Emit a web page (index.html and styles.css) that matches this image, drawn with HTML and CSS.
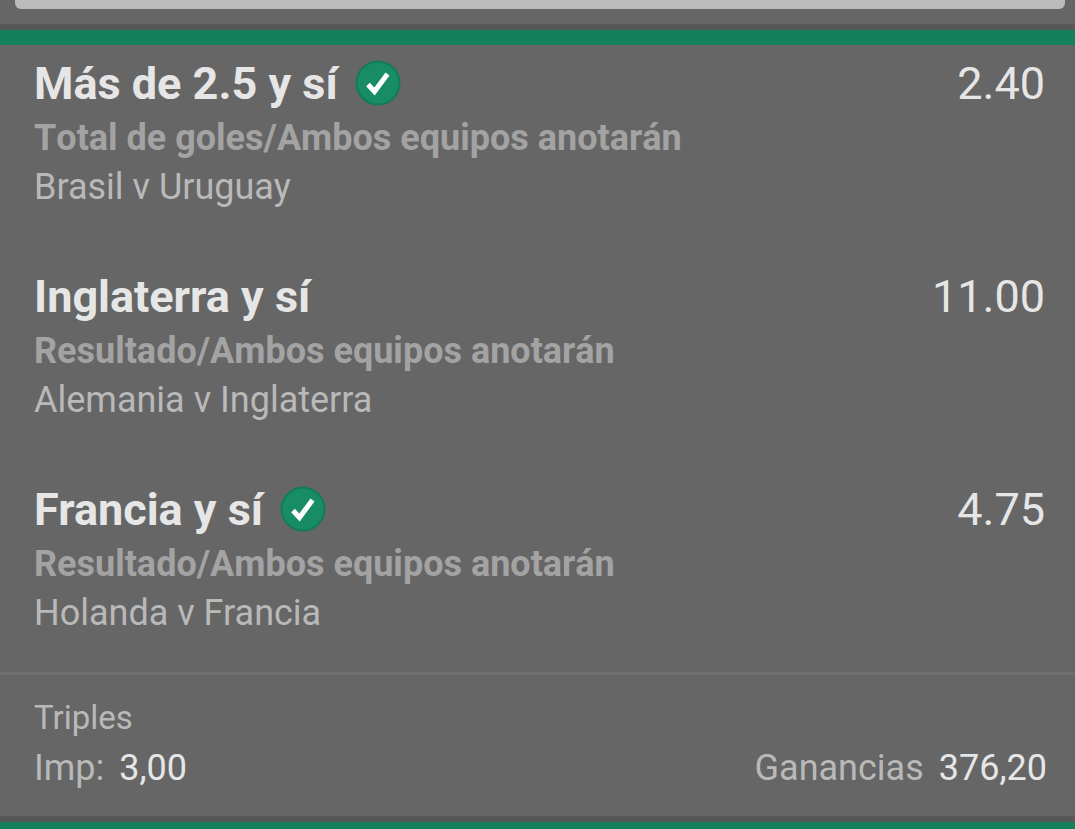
FILE: index.html
```html
<!DOCTYPE html>
<html lang="es">

<head>
  <meta charset="UTF-8">
  <meta name="viewport" content="width=device-width, initial-scale=1.0">
  <title>Mis apuestas</title>
  <link rel="stylesheet" href="styles.css">
</head>

<body>

  <!-- End of the previous card -->
  <div class="previous-card">
    <div class="previous-box"></div>
  </div>

  <main class="bet">
    <!-- Selections -->
    <ul class="selections">
      <li class="selection">
        <div class="selection-header">
          <h2>Más de 2.5 y sí</h2>
          <svg class="check" viewBox="0 0 46 46" role="img" aria-label="Acertada">
            <circle cx="23" cy="23" r="21.5" />
            <path d="M13 24.5L19.5 31.5L32.5 14" />
          </svg>
          <span class="odds">2.40</span>
        </div>
        <p class="market">Total de goles/Ambos equipos anotarán</p>
        <p class="match">Brasil v Uruguay</p>
      </li>
      <li class="selection">
        <div class="selection-header">
          <h2>Inglaterra y sí</h2>
          <span class="odds">11.00</span>
        </div>
        <p class="market">Resultado/Ambos equipos anotarán</p>
        <p class="match">Alemania v Inglaterra</p>
      </li>
      <li class="selection">
        <div class="selection-header">
          <h2>Francia y sí</h2>
          <svg class="check" viewBox="0 0 46 46" role="img" aria-label="Acertada">
            <circle cx="23" cy="23" r="21.5" />
            <path d="M13 24.5L19.5 31.5L32.5 14" />
          </svg>
          <span class="odds">4.75</span>
        </div>
        <p class="market">Resultado/Ambos equipos anotarán</p>
        <p class="match">Holanda v Francia</p>
      </li>
    </ul>

    <!-- Stake and returns -->
    <div class="summary">
      <p class="bet-type">Triples</p>
      <div class="totals">
        <p>Imp: <span class="amount">3,00</span></p>
        <p>Ganancias <span class="amount">376,20</span></p>
      </div>
    </div>
  </main>

  <div class="next-card"></div>

</body>

</html>
```

FILE: styles.css
```css
/* Global Styling */
* {
  box-sizing: border-box;
}

body {
  margin: 0;
  font-family: Roboto, Arial, sans-serif;
  background-color: #666666;
  color: #b9b9b9;
}

h2,
p,
ul {
  margin: 0;
  padding: 0;
}

/* Previous Card */
.previous-card {
  padding: 0 10px 15px 15px;
  border-bottom: 6px solid #575757;
}

.previous-box {
  height: 9px;
  background-color: #bbbbbb;
  border-radius: 0 0 6px 6px;
}

/* Bet Card */
.bet {
  border-top: 15px solid #14805c; /* Green strip between cards */
  border-bottom: 6px solid #575757;
}

.selections {
  display: flex;
  flex-direction: column;
  gap: 59px;
  padding: 11px 30px 36px 34px;
  list-style: none;
}

.selection-header {
  display: flex;
  align-items: center;
  color: #e6e6e6;
  font-size: 45px;
  line-height: 56px;
}

.selection-header h2 {
  font-size: 45px;
  font-weight: bold;
}

.check {
  width: 46px;
  height: 46px;
  margin: 0 0 3px 17px;
}

.check circle {
  fill: #178c65;
  stroke: #127c58;
  stroke-width: 2;
}

.check path {
  fill: none;
  stroke: #ffffff;
  stroke-width: 5;
}

.odds {
  margin-left: auto;
}

.market {
  color: #a3a3a3;
  font-size: 36px;
  font-weight: bold;
  font-kerning: none;
  line-height: 52px;
}

.match {
  font-size: 36px;
  line-height: 46px;
}

/* Summary */
.summary {
  padding: 18px 28px 23px 34px;
  border-top: 3px solid #707070;
  line-height: 50px;
}

.bet-type {
  font-size: 33px;
}

.totals {
  display: flex;
  justify-content: space-between;
  font-size: 36px;
}

.totals p {
  display: flex;
  gap: 15px;
}

.amount {
  color: #e6e6e6;
}

/* Next Card */
.next-card {
  height: 7px;
  background-color: #14805c;
}
```
